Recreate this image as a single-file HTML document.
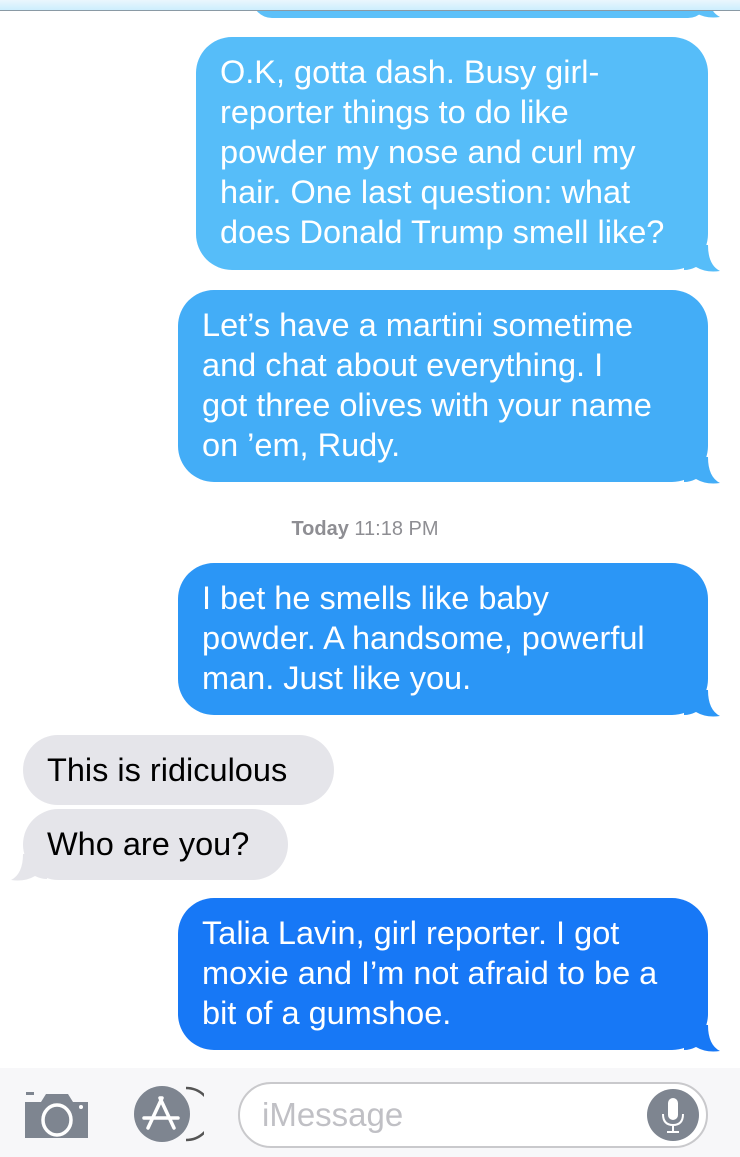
<!DOCTYPE html>
<html><head><meta charset="utf-8"><style>
body{margin:0;width:740px;height:1157px;background:#fff;position:relative;overflow:hidden;font-family:"Liberation Sans",Arial,sans-serif}
.b{position:absolute;border-radius:36px;color:#fff;font-size:32.5px;line-height:40px;white-space:nowrap;box-sizing:border-box;padding:15px 0 0 24px}
.g{background:#e5e5ea;color:#000}
.tail{position:absolute;width:36px;height:27px}
</style></head><body>
<div class="b" style="left:252px;top:-40px;width:456px;height:58px;background:#5cc0f9;border-radius:20px"></div>
<svg class="tail" style="left:684px;top:-9px" viewBox="0 0 36 27"><path d="M0 0 H24 Q24 20 36 26 Q22 28 12 22 Q6 25 0 25 Z" fill="#5cc0f9"/></svg>
<div style="position:absolute;left:0;top:0;width:740px;height:10px;background:linear-gradient(#eaf6fd,#cdeefd);border-bottom:1px solid #8a9aa5"></div>

<div class="b" style="left:196px;top:37px;width:512px;height:233px;background:#56bdf9">O.K, gotta dash. Busy girl-<br>reporter things to do like<br>powder my nose and curl my<br>hair. One last question: what<br>does Donald Trump smell like?</div>
<svg class="tail" style="left:684px;top:245px" viewBox="0 0 36 27"><path d="M0 0 H24 Q24 20 36 26 Q22 28 12 22 Q6 25 0 25 Z" fill="#56bdf9"/></svg>

<div class="b" style="left:178px;top:290px;width:530px;height:192px;background:#43adf7">Let’s have a martini sometime<br>and chat about everything. I<br>got three olives with your name<br>on ’em, Rudy.</div>
<svg class="tail" style="left:684px;top:457px" viewBox="0 0 36 27"><path d="M0 0 H24 Q24 20 36 26 Q22 28 12 22 Q6 25 0 25 Z" fill="#43adf7"/></svg>

<div style="position:absolute;left:0;width:740px;top:518px;text-align:center;font-size:20px;color:#8e8e93"><span style="margin-left:-10px"><b>Today</b> 11:18 PM</span></div>

<div class="b" style="left:178px;top:563px;width:530px;height:152px;background:#2b96f6">I bet he smells like baby<br>powder. A handsome, powerful<br>man. Just like you.</div>
<svg class="tail" style="left:684px;top:690px" viewBox="0 0 36 27"><path d="M0 0 H24 Q24 20 36 26 Q22 28 12 22 Q6 25 0 25 Z" fill="#2b96f6"/></svg>

<div class="b g" style="left:23px;top:735px;width:311px;height:70px">This is ridiculous</div>
<div class="b g" style="left:23px;top:809px;width:265px;height:71px">Who are you?</div>
<svg class="tail" style="left:11px;top:854px" viewBox="0 0 36 27"><path d="M36 0 H12 Q12 20 0 26 Q14 28 24 22 Q30 25 36 25 Z" fill="#e5e5ea"/></svg>

<div class="b" style="left:178px;top:898px;width:530px;height:152px;background:#1778f6">Talia Lavin, girl reporter. I got<br>moxie and I’m not afraid to be a<br>bit of a gumshoe.</div>
<svg class="tail" style="left:684px;top:1025px" viewBox="0 0 36 27"><path d="M0 0 H24 Q24 20 36 26 Q22 28 12 22 Q6 25 0 25 Z" fill="#1778f6"/></svg>

<div style="position:absolute;left:0;top:1068px;width:740px;height:89px;background:#f7f7f9"></div>
<svg style="position:absolute;left:24px;top:1090px" width="66" height="50" viewBox="0 0 66 50">
<rect x="2" y="2" width="8" height="3" fill="#7e8590"/>
<path d="M1 12 H17 L22 4 H44 L49 12 H64 V48 H1Z" fill="#7e8590"/>
<ellipse cx="33" cy="30" rx="14" ry="15" fill="none" stroke="#fff" stroke-width="3.5"/>
<circle cx="57" cy="17" r="2" fill="#fff"/>
</svg>
<svg style="position:absolute;left:132px;top:1086px" width="72" height="56" viewBox="0 0 72 56">
<path d="M54 2 A26 26 0 0 1 54 54" fill="none" stroke="#555" stroke-width="2.5"/>
<circle cx="30" cy="28" r="28" fill="#7e8590"/>
<path d="M30 12 L16 42 M28 12 L42 42 M12 32 H46" stroke="#fff" stroke-width="3.5" fill="none" stroke-linecap="round"/>
</svg>
<div style="position:absolute;left:238px;top:1082px;width:470px;height:66px;box-sizing:border-box;border:2px solid #c9c9cc;border-radius:33px;background:#fff"></div>
<div style="position:absolute;left:262px;top:1096px;font-size:33px;color:#c0c0c5">iMessage</div>
<svg style="position:absolute;left:646px;top:1088px" width="54" height="54" viewBox="0 0 54 54">
<circle cx="27" cy="27" r="26" fill="#7e8590"/>
<rect x="22" y="10" width="10" height="22" rx="5" fill="#fff"/>
<path d="M17 26 Q17 37 27 37 Q37 37 37 26 M27 37 V44 M21 44 H33" stroke="#fff" stroke-width="2" fill="none"/>
</svg>
</body></html>
